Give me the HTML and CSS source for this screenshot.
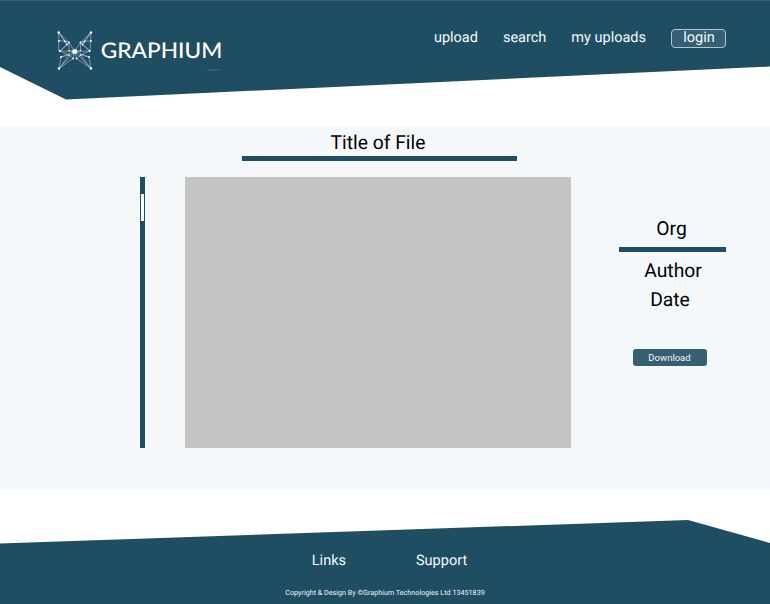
FILE: index.html
```html
<!DOCTYPE html>
<html lang="en">
<head>
<meta charset="utf-8">
<title>Graphium</title>
<link rel="stylesheet" href="styles.css">
</head>
<body>
<header class="header">
  <svg class="logo" width="168" height="44" viewBox="56 29 168 44" role="img" aria-label="Graphium">
    <g class="wire">
      <path d="M58.700 32.500V51L74.700 51.500L69 42.500ZM58.700 32.500L65 41.500M58.700 32.500L67 44.500M58.700 41H65L69 42.500M60 51L67 44.500L65 41.500M60 51L69 42.500V50.500M74.700 51.500L61 57L59 68.500L74.700 51.500L69 50.500M60 51L69 55L61 57M59 68.500L69 55L73 58.500L59 68.500M74.700 51.500L73 58.500"/>
      <path d="M91 32.500L90 51L74.700 51.500L80.500 42.500ZM91 32.500L84.500 41.500M91 32.500L82.500 44.500M91 41H84.500L80.500 42.500M90 51L82.500 44.500L84.500 41.500M90 51L80.500 42.500V50.500M74.700 51.500L89 57L91 68.500L74.700 51.500L80.500 50.500M90 51L80.500 55L89 57M91 68.500L80.500 55L76.500 58.500L91 68.500M74.700 51.500L76.500 58.500"/>
    </g>
    <g class="nodes">
      <circle cx="58.700" cy="32.500" r="1.200"/><circle cx="91" cy="32.500" r="1.200"/>
      <circle cx="59" cy="68.500" r="1.200"/><circle cx="91" cy="68.500" r="1.200"/>
      <circle cx="59" cy="41" r=".9"/><circle cx="91" cy="41" r=".9"/>
      <circle cx="65" cy="41.500" r=".9"/><circle cx="84.500" cy="41.500" r=".9"/>
      <circle cx="69" cy="42.500" r=".9"/><circle cx="80.500" cy="42.500" r=".9"/>
      <circle cx="67" cy="44.500" r=".9"/><circle cx="82.500" cy="44.500" r=".9"/>
      <circle cx="60" cy="51" r="1"/><circle cx="89.700" cy="51" r="1"/>
      <circle cx="69" cy="50.500" r=".7"/><circle cx="80.500" cy="50.500" r=".7"/>
      <circle cx="69" cy="55" r=".8"/><circle cx="80.500" cy="55" r=".8"/>
      <circle cx="61" cy="57" r=".9"/><circle cx="89" cy="57" r=".9"/>
      <circle cx="73" cy="58.500" r=".9"/><circle cx="76.500" cy="58.500" r=".9"/>
      <circle cx="74.700" cy="51.500" r="2.500"/>
    </g>
    <text class="wordmark" x="100.800" y="58" textLength="121.500" lengthAdjust="spacingAndGlyphs">GRAPHIUM</text>
    <path class="swash" d="M205 70.500Q213 69 222.500 69.300Q216 71.300 205 70.500Z"/>
  </svg>
  <nav class="nav">
    <a>upload</a>
    <a>search</a>
    <a>my uploads</a>
    <a class="login">login</a>
  </nav>
</header>
<main class="main">
  <div class="scroll"><div class="thumb"></div></div>
  <section class="file">
    <h1 class="title">Title of File</h1>
    <div class="preview"></div>
  </section>
  <aside class="meta">
    <div class="org">Org</div>
    <div class="author">Author</div>
    <div class="date">Date</div>
    <button class="download">Download</button>
  </aside>
</main>
<footer class="footer">
  <div class="links"><a>Links</a><a>Support</a></div>
  <div class="copy">Copyright &amp; Design By ©Graphium Technologies Ltd 13451839</div>
</footer>
</body>
</html>
```
FILE: styles.css
```css
* { box-sizing: border-box; }
body {
  margin: 0;
  width: 770px;
  height: 604px;
  overflow: hidden;
  background: #fff;
  font-family: Roboto, sans-serif;
  text-rendering: geometricPrecision;
  display: flex;
  flex-direction: column;
}
.header {
  height: 100px;
  background: #1f4e63;
  border-top: 1px solid #355f72;
  clip-path: polygon(0 0, 100% 0, 100% 66.500px, 66px 99.500px, 0 67px);
  display: flex;
  align-items: flex-start;
  justify-content: space-between;
  padding: 28px 44px 0 56px;
}
.logo { display: block; }
.wire { fill: none; stroke: #dce6ea; stroke-width: .6; stroke-opacity: .8; }
.nodes { fill: #fff; }
.wordmark { font: 500 21.500px Lato, sans-serif; fill: #fff; }
.swash { fill: #47707f; }
.nav {
  display: flex;
  color: #f4f8fb;
  font-size: 14.500px;
  line-height: 17px;
  gap: 25px;
}
.login {
  width: 55px;
  height: 19px;
  line-height: 16px;
  padding-left: 1px;
  text-align: center;
  background: #355f72;
  border: 1px solid #b5c6ce;
  border-radius: 4px;
}
.main {
  margin-top: 26px;
  height: 364px;
  background: #f4f8fb;
  display: flex;
  padding-left: 140px;
}
.scroll {
  width: 5px;
  height: 271px;
  margin-top: 51px;
  background: #1f4e63;
  padding: 17px 1px 0;
}
.thumb { height: 27px; background: #fff; }
.file { width: 386px; margin-left: 40px; }
.title {
  width: 275px;
  height: 35px;
  margin: 0 0 16px 57px;
  padding: 5px 3px 0 0;
  border-bottom: 5px solid #1f4e63;
  text-align: center;
  font-weight: 400;
  font-size: 19.300px;
  line-height: 24px;
}
.preview { height: 271px; background: #c4c4c4; }
.meta {
  width: 107px;
  margin-left: 48px;
  padding-top: 91px;
  display: flex;
  flex-direction: column;
  align-items: center;
  font-size: 19.300px;
  line-height: 24px;
}
.org { width: 100%; height: 35px; border-bottom: 5px solid #1f4e63; text-align: center; padding-right: 2px; }
.author { margin: 7px 0 0 1px; }
.date { margin: 5px 5px 0 0; }
.download {
  width: 74px;
  height: 17px;
  margin-top: 37px;
  margin-right: 6px;
  padding: 0;
  border: 0;
  border-radius: 3px;
  background: #355f72;
  color: #f4f8fb;
  font: 9.500px/17px Roboto, sans-serif;
}
.footer {
  height: 84px;
  margin-top: 30px;
  background: #1f4e63;
  color: #f4f8fb;
  clip-path: polygon(0 23.500px, 688px 0, 100% 23px, 100% 100%, 0 100%);
  text-align: center;
}
.links {
  display: flex;
  justify-content: center;
  gap: 70px;
  padding: 32px 0 0 9px;
  font-size: 14.500px;
  line-height: 17px;
}
.copy { margin-top: 19px; font-size: 7.200px; line-height: 9px; }
```
